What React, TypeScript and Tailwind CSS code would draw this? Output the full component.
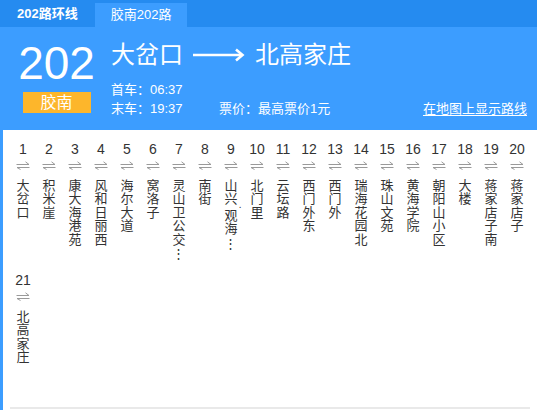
import React from 'react';

const stops = [
  '大岔口', '积米崖', '康大海港苑', '风和日丽西', '海尔大道', '窝洛子', '灵山卫公交…',
  '南街', '山兴·观海…', '北门里', '云坛路', '西门外东', '西门外', '瑞海花园北',
  '珠山文苑', '黄海学院', '朝阳山小区', '大楼', '蒋家店子南', '蒋家店子', '北高家庄',
];

function Swap() {
  return (
    <svg width="14" height="9" viewBox="0 0 14 9" fill="none" stroke="#9a9a9a" strokeWidth="1">
      <path d="M0.5 3.5H13L9.5 0.8" />
      <path d="M13.5 6.5H1L4.5 8.5" />
    </svg>
  );
}

function StopName({ name }: { name: string }) {
  const chars = Array.from(name);
  return (
    <div className="mt-[9px] flex flex-col items-center text-[13px] leading-[13.4px] text-[#333]">
      {chars.map((c, i) => {
        if (c === '·') return <div key={i} className="relative h-[3px] w-[13px]"><span className="absolute right-[-4px] top-[-6px] text-[10px] leading-none">.</span></div>;
        if (c === '…') return <div key={i} className="mt-[1px] leading-[13px]">⋮</div>;
        return <div key={i}>{c}</div>;
      })}
    </div>
  );
}

export default function App() {
  return (
    <div className="flex h-[410px] w-[537px] flex-col overflow-hidden bg-white font-['Liberation_Sans','Noto_Sans_CJK_SC',sans-serif]">
      <div className="flex h-[27px] shrink-0 bg-[#258bf0] text-[13px] font-bold text-white">
        <div className="flex items-center px-[17px]">202路环线</div>
        <div className="mt-[3px] flex items-center bg-[#3c9dff] px-[16px] font-normal">胶南202路</div>
      </div>

      <div className="flex h-[103px] shrink-0 bg-[#3c9dff] text-white">
        <div className="ml-[16px] flex w-[81px] shrink-0 flex-col items-center pt-[13px]">
          <div className="text-[46px] leading-[46px]">202</div>
          <div className="mt-[6px] flex h-[21px] w-[68px] items-center justify-center bg-[#fdb62b] text-[16px]">胶南</div>
        </div>
        <div className="ml-[14px] flex flex-1 flex-col pr-[10px] pt-[13px]">
          <div className="flex items-center text-[24px] leading-[30px]">
            <span>大岔口</span>
            <svg className="mx-[10px]" width="52" height="16" viewBox="0 0 52 16" fill="none" stroke="white" strokeWidth="2.6">
              <path d="M0 8H49" />
              <path d="M43 2.5L49.5 8L43 13.5" />
            </svg>
            <span>北高家庄</span>
          </div>
          <div className="mt-[10px] text-[13px] leading-[19px]">首车：06:37</div>
          <div className="flex text-[13px] leading-[19px]">
            <span className="w-[108px]">末车：19:37</span>
            <span>票价：最高票价1元</span>
            <span className="ml-auto underline underline-offset-2">在地图上显示路线</span>
          </div>
        </div>
      </div>

      <div className="h-[280px] border-l-[3px] border-[#3c9dff]">
        <div className="mx-[7px] flex h-[279px] flex-wrap content-start border-b-2 border-[#e9e9e9] pt-[9px]">
          {stops.map((s, i) => (
            <div key={i} className="flex h-[131px] w-[26px] flex-col items-center">
              <div className="text-[14px] leading-[20px] text-[#333]">{i + 1}</div>
              <div className="mt-[2px]"><Swap /></div>
              <StopName name={s} />
            </div>
          ))}
        </div>
      </div>
    </div>
  );
}
